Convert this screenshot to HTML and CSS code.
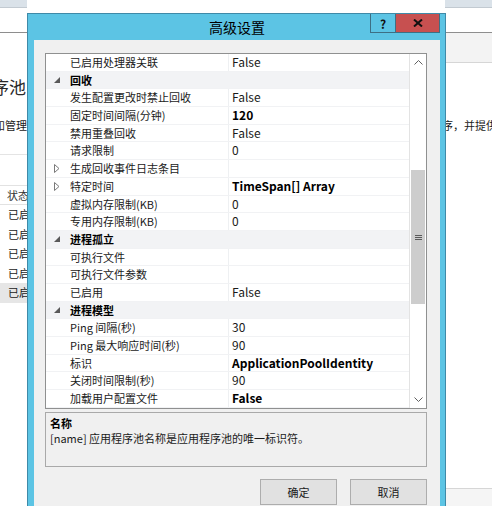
FILE: index.html
```html
<!DOCTYPE html>
<html lang="zh-CN">
<head>
<meta charset="utf-8">
<title>高级设置</title>
<link rel="stylesheet" href="styles.css">
</head>
<body>
<div class="bgwin">
  <div class="pane pane-left">
    <div class="strip-top"></div>
    <div class="strip-head"></div>
    <div class="lp-title"><span>应用程序池</span></div>
    <div class="lp-desc"><span>在此页上查看和管理</span></div>
    <div class="lp-sep"></div>
    <div class="lv">
      <div class="lv-head"><span class="lv-colsep"></span><span class="lv-htext">状态</span></div>
      <div class="lv-row">已启动</div>
      <div class="lv-row">已启动</div>
      <div class="lv-row">已启动</div>
      <div class="lv-row">已启动</div>
      <div class="lv-row sel">已启动</div>
    </div>
  </div>
  <div class="pane pane-mid"></div>
  <div class="pane pane-right">
    <div class="strip-top"></div>
    <div class="strip-head"></div>
    <div class="rp-band"></div>
    <div class="rp-desc">序，并提供不同应用程序之间的隔离。</div>
    <div class="rp-foot"></div>
  </div>
</div>

<div class="dialog">
  <div class="dlg-title">高级设置</div>
  <div class="capbtns">
    <div class="cap-help">?</div>
    <div class="cap-close">
      <svg width="10" height="8" viewBox="0 0 10 8"><path d="M1 0.5 L9 7.5 M9 0.5 L1 7.5" stroke="#111" stroke-width="2" fill="none"/></svg>
    </div>
  </div>
  <div class="dlg-body">
    <div class="pg">
      <div class="pg-rows">
        <div class="row"><div class="gut"></div><div class="name">已启用处理器关联</div><div class="val">False</div></div>
        <div class="row cat"><div class="gut"><svg width="6" height="6" viewBox="0 0 6 6"><path d="M6 0 V6 H0 Z" fill="#595959"/></svg></div><div class="name">回收</div></div>
        <div class="row"><div class="gut"></div><div class="name">发生配置更改时禁止回收</div><div class="val">False</div></div>
        <div class="row"><div class="gut"></div><div class="name">固定时间间隔(分钟)</div><div class="val b">120</div></div>
        <div class="row"><div class="gut"></div><div class="name">禁用重叠回收</div><div class="val">False</div></div>
        <div class="row"><div class="gut"></div><div class="name">请求限制</div><div class="val">0</div></div>
        <div class="row"><div class="gut"><svg width="6" height="9" viewBox="0 0 6 9"><path d="M0.5 0.5 L5 4.5 L0.5 8.5 Z" fill="#fff" stroke="#7a7a7a"/></svg></div><div class="name">生成回收事件日志条目</div><div class="val"></div></div>
        <div class="row"><div class="gut"><svg width="6" height="9" viewBox="0 0 6 9"><path d="M0.5 0.5 L5 4.5 L0.5 8.5 Z" fill="#fff" stroke="#7a7a7a"/></svg></div><div class="name">特定时间</div><div class="val b">TimeSpan[] Array</div></div>
        <div class="row"><div class="gut"></div><div class="name">虚拟内存限制(KB)</div><div class="val">0</div></div>
        <div class="row"><div class="gut"></div><div class="name">专用内存限制(KB)</div><div class="val">0</div></div>
        <div class="row cat"><div class="gut"><svg width="6" height="6" viewBox="0 0 6 6"><path d="M6 0 V6 H0 Z" fill="#595959"/></svg></div><div class="name">进程孤立</div></div>
        <div class="row"><div class="gut"></div><div class="name">可执行文件</div><div class="val"></div></div>
        <div class="row"><div class="gut"></div><div class="name">可执行文件参数</div><div class="val"></div></div>
        <div class="row"><div class="gut"></div><div class="name">已启用</div><div class="val">False</div></div>
        <div class="row cat"><div class="gut"><svg width="6" height="6" viewBox="0 0 6 6"><path d="M6 0 V6 H0 Z" fill="#595959"/></svg></div><div class="name">进程模型</div></div>
        <div class="row"><div class="gut"></div><div class="name">Ping 间隔(秒)</div><div class="val">30</div></div>
        <div class="row"><div class="gut"></div><div class="name">Ping 最大响应时间(秒)</div><div class="val">90</div></div>
        <div class="row"><div class="gut"></div><div class="name">标识</div><div class="val b">ApplicationPoolIdentity</div></div>
        <div class="row"><div class="gut"></div><div class="name">关闭时间限制(秒)</div><div class="val">90</div></div>
        <div class="row"><div class="gut"></div><div class="name">加载用户配置文件</div><div class="val b">False</div></div>
      </div>
      <div class="pg-scroll">
        <div class="sb-btn"><svg width="9" height="5" viewBox="0 0 9 5"><path d="M0.5 4.5 L4.5 0.5 L8.5 4.5" fill="none" stroke="#606060"/></svg></div>
        <div class="sb-gap"></div>
        <div class="sb-thumb"><svg width="7" height="7" viewBox="0 0 7 7"><path d="M0 1.5H7M0 3.5H7M0 5.5H7" stroke="#5a5a5a"/></svg></div>
        <div class="sb-rest"></div>
        <div class="sb-btn"><svg width="9" height="5" viewBox="0 0 9 5"><path d="M0.5 0.5 L4.5 4.5 L8.5 0.5" fill="none" stroke="#606060"/></svg></div>
      </div>
    </div>
    <div class="desc">
      <div class="desc-title">名称</div>
      <div class="desc-text">[name] 应用程序池名称是应用程序池的唯一标识符。</div>
    </div>
    <div class="actions">
      <div class="btn">确定</div>
      <div class="btn">取消</div>
    </div>
  </div>
</div>
</body>
</html>
```

FILE: styles.css
```css
* { box-sizing: border-box; }
html, body { margin: 0; padding: 0; }
body {
  width: 492px;
  height: 506px;
  overflow: hidden;
  background: #ffffff;
  font-family: "Noto Sans CJK SC", "Noto Sans", sans-serif;
  color: #1a1a1a;
  position: relative;
}

/* background window */
.bgwin {
  display: grid;
  grid-template-columns: 27px 418px 47px;
  height: 506px;
}
.pane {
  display: flex;
  flex-direction: column;
  overflow: hidden;
  min-width: 0;
}
.strip-top {
  flex: none;
  height: 8px;
  background: #dae2e9;
  border-bottom: 1px solid #c2cad1;
}
.strip-head {
  flex: none;
  height: 25px;
  border-bottom: 1px solid #8e8e8e;
}
.lp-title {
  flex: none;
  margin-top: 44px;
  height: 20px;
  line-height: 20px;
  font-size: 17px;
  display: flex;
  justify-content: flex-end;
  padding-right: 1px;
  white-space: nowrap;
  color: #2a2a2a;
}
.lp-desc {
  flex: none;
  margin-top: 21px;
  height: 14px;
  line-height: 14px;
  font-size: 11px;
  display: flex;
  justify-content: flex-end;
  white-space: nowrap;
}
.lp-sep {
  flex: none;
  margin-top: 22px;
  height: 1px;
  background: #e4e4e4;
}
.lv {
  flex: none;
  margin-top: 30px;
  border-top: 1px solid #e2e2e2;
}
.lv-head {
  height: 19px;
  border-bottom: 1px solid #e2e2e2;
  display: flex;
  align-items: center;
  font-size: 11px;
  white-space: nowrap;
  color: #333;
}
.lv-colsep {
  width: 1px;
  height: 19px;
  background: #e2e2e2;
  margin-left: 3px;
}
.lv-htext { padding-left: 4px; }
.lv-row {
  height: 19.5px;
  line-height: 19.5px;
  padding-left: 8px;
  font-size: 11px;
  white-space: nowrap;
}
.lv-row.sel {
  background: #e6e6e6;
}

.rp-band {
  flex: none;
  height: 30px;
  background: #f3f3f3;
  border-bottom: 1px solid #d6d6d6;
}
.rp-desc {
  flex: none;
  margin-top: 55px;
  margin-left: -3px;
  line-height: 14px;
  font-size: 11px;
  white-space: nowrap;
}
.rp-foot {
  margin-top: auto;
  height: 18px;
  border-top: 1px solid #d6d6d6;
  background: #f5f5f5;
}

/* dialog window */
.dialog {
  position: absolute;
  left: 27px;
  top: 13px;
  width: 419px;
  height: 493px;
  border: 1px solid #3f8aa8;
  border-bottom: none;
  background: #5cc4e4;
  padding: 0 5px 0 6px;
  display: flex;
  flex-direction: column;
  overflow: hidden;
}
.dlg-title {
  flex: none;
  height: 26px;
  display: flex;
  align-items: center;
  justify-content: center;
  font-size: 14px;
  color: #000;
}
.capbtns {
  position: absolute;
  top: -1px;
  right: 5px;
  display: flex;
}
.cap-help {
  width: 26px;
  height: 20px;
  border: 1px solid #3d6f84;
  background: #5cc4e4;
  display: flex;
  align-items: center;
  justify-content: center;
  font-size: 12px;
  font-weight: bold;
  color: #111;
}
.cap-close {
  width: 44px;
  height: 20px;
  border: 1px solid #3d6f84;
  border-left: none;
  background: #c75050;
  display: flex;
  align-items: center;
  justify-content: center;
}
.dlg-body {
  flex: 1;
  background: #f0f0f0;
  padding: 13px 13px 0 11px;
  display: flex;
  flex-direction: column;
}

/* property grid */
.pg {
  flex: none;
  height: 356px;
  border: 1px solid #8f9090;
  background: #ffffff;
  display: flex;
}
.pg-rows {
  flex: 1;
  display: flex;
  flex-direction: column;
  min-width: 0;
}
.row {
  flex: none;
  height: 17.7px;
  display: flex;
  border-bottom: 1px solid #f1f2f4;
  white-space: nowrap;
}
.gut {
  width: 21px;
  flex: none;
  display: flex;
  align-items: center;
  justify-content: center;
}
.name {
  width: 161px;
  flex: none;
  padding-left: 3px;
  font-size: 11px;
  line-height: 16.7px;
  overflow: hidden;
  color: #1a1a1a;
}
.val {
  flex: 1;
  border-left: 1px solid #eef0f2;
  padding-left: 3px;
  font-size: 12px;
  line-height: 16.7px;
  overflow: hidden;
  color: #1a1a1a;
}
.val.b { font-weight: bold; color: #000; }
.row.cat {
  background: #f2f3f5;
}
.row.cat .name {
  width: auto;
  flex: 1;
  font-weight: bold;
  color: #000;
}
.pg-scroll {
  width: 17px;
  flex: none;
  border-left: 1px solid #e3e3e3;
  display: flex;
  flex-direction: column;
  background: #ffffff;
}
.sb-btn {
  flex: none;
  height: 17px;
  display: flex;
  align-items: center;
  justify-content: center;
}
.sb-gap { flex: none; height: 99px; }
.sb-thumb {
  flex: none;
  height: 134px;
  margin: 0 1px;
  background: #cdcdcd;
  display: flex;
  align-items: center;
  justify-content: center;
}
.sb-rest { flex: 1; }

/* description */
.desc {
  flex: none;
  margin-top: 3px;
  height: 55px;
  border: 1px solid #a9a9a9;
  padding: 3px 0 0 4px;
  font-size: 11px;
  line-height: 15px;
  color: #1a1a1a;
}
.desc-title { font-weight: bold; color: #000; }

/* buttons */
.actions {
  flex: none;
  margin-top: 12px;
  display: flex;
  justify-content: flex-end;
  gap: 13px;
}
.btn {
  width: 77px;
  height: 26px;
  border: 1px solid #adadad;
  background: #e1e1e1;
  font-size: 11px;
  display: flex;
  align-items: center;
  justify-content: center;
  color: #1a1a1a;
}
```
